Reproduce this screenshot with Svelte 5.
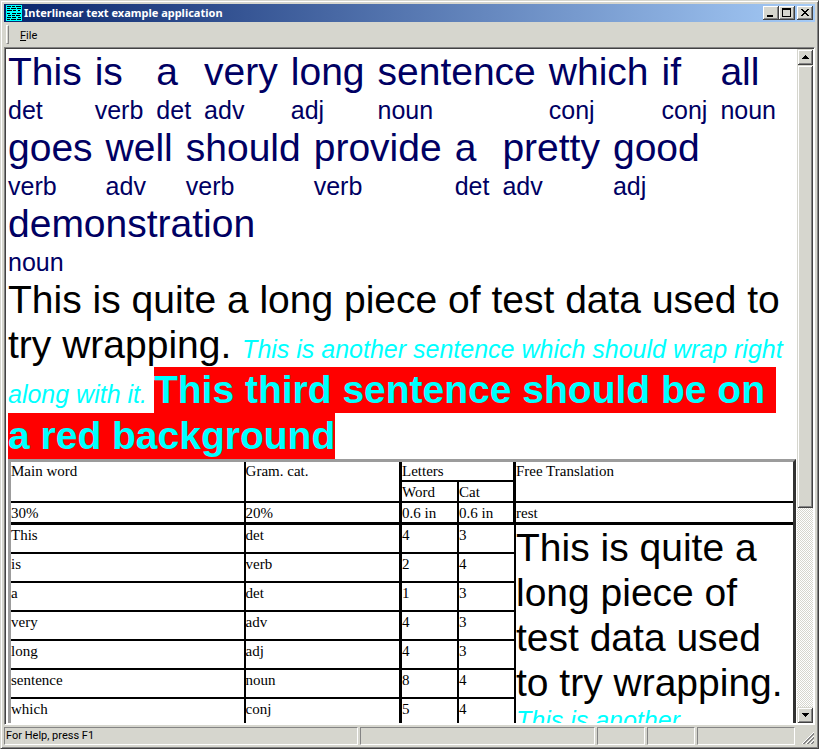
<script>
  const words = [
    ['This', 'det'], ['is', 'verb'], ['a', 'det'], ['very', 'adv'], ['long', 'adj'], ['sentence', 'noun'],
    ['which', 'conj'], ['if', 'conj'], ['all', 'noun'], ['goes', 'verb'], ['well', 'adv'], ['should', 'verb'],
    ['provide', 'verb'], ['a', 'det'], ['pretty', 'adv'], ['good', 'adj'], ['demonstration', 'noun']
  ];
  const rows = words.map(([w, c]) => [w, c, w.length, c.length]);
</script>

{#snippet prose()}
  <span class="big">This is quite a long piece of test data used to try wrapping.{' '}</span><em>This is another sentence which should wrap right along with it.{' '}</em><strong>This third sentence should be on&nbsp;<wbr />a red background</strong>
{/snippet}

<div class="window">
  <header class="title">
    <svg class="app" viewBox="0 0 16 16" shape-rendering="crispEdges">
      <rect width="16" height="16" fill="#00ffff" />
      <path d="M1 1.5h4M6 1.5h3M10 1.5h5M1 3.5h3M5 3.5h5M11 3.5h4M1 5.5h5M7 5.5h3M12 5.5h2M1 8.5h3M6 8.5h4M11 8.5h4M2 10.5h3M6 10.5h3M10 10.5h4M1 12.5h4M6 12.5h4M12 12.5h3M1 14.5h3M5 14.5h5M11 14.5h4" stroke="#000" />
    </svg>
    <h1>Interlinear text example application</h1>
    <button aria-label="Minimize"><svg viewBox="0 0 12 10" shape-rendering="crispEdges"><path d="M2 7h6v2H2z" /></svg></button>
    <button aria-label="Maximize"><svg viewBox="0 0 12 10" shape-rendering="crispEdges"><path fill-rule="evenodd" d="M1 0h9v9H1zM2 2v6h7V2z" /></svg></button>
    <button aria-label="Close" class="close"><svg viewBox="0 0 12 10" shape-rendering="crispEdges"><path d="M2 1h2v1h1v1h2V2h1V1h2v1H9v1H8v1H7v1h1v1h1v1h1v1H8V7H7V6H5v1H4v1H2V7h1V6h1V5h1V4H4V3H3V2H2z" /></svg></button>
  </header>
  <nav class="menu"><span class="grip"></span><button><u>F</u>ile</button></nav>

  <div class="client">
    <main>
      <div class="interlinear">
        {#each words as [word, cat]}
          <span class="pair"><span class="word">{word}</span><span>{cat}</span></span>
        {/each}
      </div>
      <p>{@render prose()}</p>
      <table>
        <colgroup><col class="c1" /><col class="c2" /><col class="c3" /><col class="c3" /><col /></colgroup>
        <thead>
          <tr class="r1"><th rowspan="2">Main word</th><th rowspan="2" class="thick">Gram. cat.</th><th colspan="2" class="thick">Letters</th><th rowspan="2">Free Translation</th></tr>
          <tr class="r2"><th>Word</th><th>Cat</th></tr>
          <tr class="r3"><th>30%</th><th class="thick">20%</th><th>0.6 in</th><th class="thick">0.6 in</th><th>rest</th></tr>
        </thead>
        <tbody>
          {#each rows as r, i}
            <tr>
              <td>{r[0]}</td><td class="thick">{r[1]}</td><td>{r[2]}</td><td>{r[3]}</td>
              {#if i === 0}<td class="free" rowspan={rows.length}>{@render prose()}</td>{/if}
            </tr>
          {/each}
        </tbody>
      </table>
    </main>
    <div class="scroll">
      <button aria-label="Scroll up"><svg viewBox="0 0 7 4" shape-rendering="crispEdges"><path d="M3 0h1v1h1v1h1v1h1v1H0V3h1V2h1V1h1z" /></svg></button>
      <div class="track"><div class="thumb"></div></div>
      <button aria-label="Scroll down"><svg viewBox="0 0 7 4" shape-rendering="crispEdges"><path d="M0 0h7v1H6v1H5v1H4v1H3V3H2V2H1V1H0z" /></svg></button>
    </div>
  </div>

  <footer>
    <span class="pane help">For Help, press F1</span>
    <span class="pane mid"></span>
    <span class="pane key"></span>
    <span class="pane key"></span>
    <span class="pane last"></span>
    <svg class="size" viewBox="0 0 13 13"><path d="M1 13L13 1M5 13L13 5M9 13L13 9" stroke="#fff" /><path d="M2 13L13 2M3 13L13 3M6 13L13 6M7 13L13 7M10 13L13 10M11 13L13 11" stroke="#848484" /></svg>
  </footer>
</div>

<style>
  :global(body) { margin: 0; }
  * { box-sizing: border-box; }
  .window {
    display: flex;
    flex-direction: column;
    height: 100vh;
    padding: 2px;
    background: #d6d6ce;
    border: 1px solid;
    border-color: #d6d6ce #424242 #424242 #d6d6ce;
    box-shadow: inset 1px 1px #fff, inset -1px -1px #848484;
    font: 11px Roboto, "Noto Sans", sans-serif;
    color: #000;
  }
  button {
    padding: 0;
    border: 0;
    background: #d6d6ce;
    font: inherit;
    color: #000;
  }
  .title {
    display: flex;
    flex: none;
    align-items: center;
    height: 18px;
    margin: 1px 1px 0;
    padding: 0 2px;
    background: linear-gradient(90deg, #08246b, #a5cbf7);
  }
  .app { width: 16px; height: 16px; margin-right: 2px; }
  h1 {
    flex: 1;
    margin: 0;
    font: 700 11px/16px "Noto Sans", "Open Sans", sans-serif;
    color: #fff;
  }
  .title button {
    width: 16px;
    height: 14px;
    padding: 2px;
    box-shadow: inset -1px -1px #424242, inset 1px 1px #fff, inset -2px -2px #848484;
  }
  .title .close { margin-left: 2px; }
  .title button svg { display: block; width: 12px; height: 10px; }
  .menu {
    display: flex;
    flex: none;
    align-items: center;
    height: 25px;
    padding-left: 3px;
  }
  .grip {
    width: 3px;
    height: 19px;
    margin-right: 11px;
    border: 1px solid;
    border-color: #fff #848484 #848484 #fff;
  }
  .menu button { padding-top: 2px; line-height: 16px; }
  .client {
    display: flex;
    flex: 1;
    min-height: 0;
    margin: 0 1px;
    padding: 1px;
    border: 1px solid;
    border-color: #848484 #fff #fff #848484;
    box-shadow: inset 1px 1px #424242;
    background: #fff;
  }
  main {
    flex: 1;
    min-width: 0;
    overflow: hidden;
    padding: 0 1px 0 2px;
    font: 25px/30px "Liberation Sans", Arial, sans-serif;
  }
  .interlinear {
    display: flex;
    flex-wrap: wrap;
    column-gap: 13px;
    color: #000063;
  }
  .pair { display: flex; flex-direction: column; }
  .word { font-size: 39px; line-height: 46px; }
  .big { font-size: 39px; line-height: 45px; }
  p { margin: 0; }
  em { color: #0ff; }
  strong {
    padding: 1px 0 2px;
    font-size: 39px;
    line-height: 46px;
    background: #f00;
    color: #0ff;
    -webkit-box-decoration-break: clone;
    box-decoration-break: clone;
  }
  table {
    width: 100%;
    table-layout: fixed;
    border: 3px solid;
    border-color: #9c9c9c #313131 #313131 #9c9c9c;
    border-spacing: 0;
    font: 15px/18px "Liberation Serif", "Times New Roman", serif;
  }
  .c1 { width: 30%; }
  .c2 { width: 20%; }
  .c3 { width: 57px; }
  th, td {
    padding: 0;
    border: solid #000;
    border-width: 0 2px 2px 0;
    font-weight: 400;
    text-align: left;
    vertical-align: top;
  }
  td { padding-top: 1px; }
  .thick { border-right-width: 3px; }
  th:last-child { border-right-width: 0; }
  .r2 th:last-child { border-right-width: 3px; }
  .r1 { height: 20px; }
  .r2 { height: 21px; }
  .r3 { height: 22px; }
  .r2 th, .r3 th { padding-top: 1px; }
  .r3 th { border-bottom-width: 3px; }
  tbody tr { height: 29px; }
  tbody tr:last-child { height: 58px; }
  td.free {
    padding: 0 8px 0 0;
    border-width: 0;
    font: 25px/30px "Liberation Sans", Arial, sans-serif;
  }
  .scroll { display: flex; flex: none; flex-direction: column; width: 16px; }
  .scroll button {
    display: flex;
    align-items: center;
    justify-content: center;
    height: 16px;
  }
  .scroll button svg { width: 7px; height: 4px; }
  .scroll button, .thumb {
    background: #d6d6ce;
    box-shadow: inset 1px 1px #d6d6ce, inset -1px -1px #424242, inset 2px 2px #fff, inset -2px -2px #848484;
  }
  .track {
    flex: 1;
    background: repeating-conic-gradient(#fff 0 25%, #d6d6ce 0 50%) 0 0 / 2px 2px;
  }
  .thumb { height: 69%; }
  footer {
    display: flex;
    flex: none;
    gap: 2px;
    height: 21px;
    padding: 2px 0 1px 1px;
  }
  .pane {
    border: 1px solid;
    border-color: #848484 #fff #fff #848484;
    line-height: 16px;
  }
  .help { flex: 354; padding-left: 1px; }
  .mid { flex: 235; }
  .key { width: 48px; }
  .last { width: 98px; }
  .size { width: 13px; height: 13px; margin: 4px 2px 0 4px; }
</style>
